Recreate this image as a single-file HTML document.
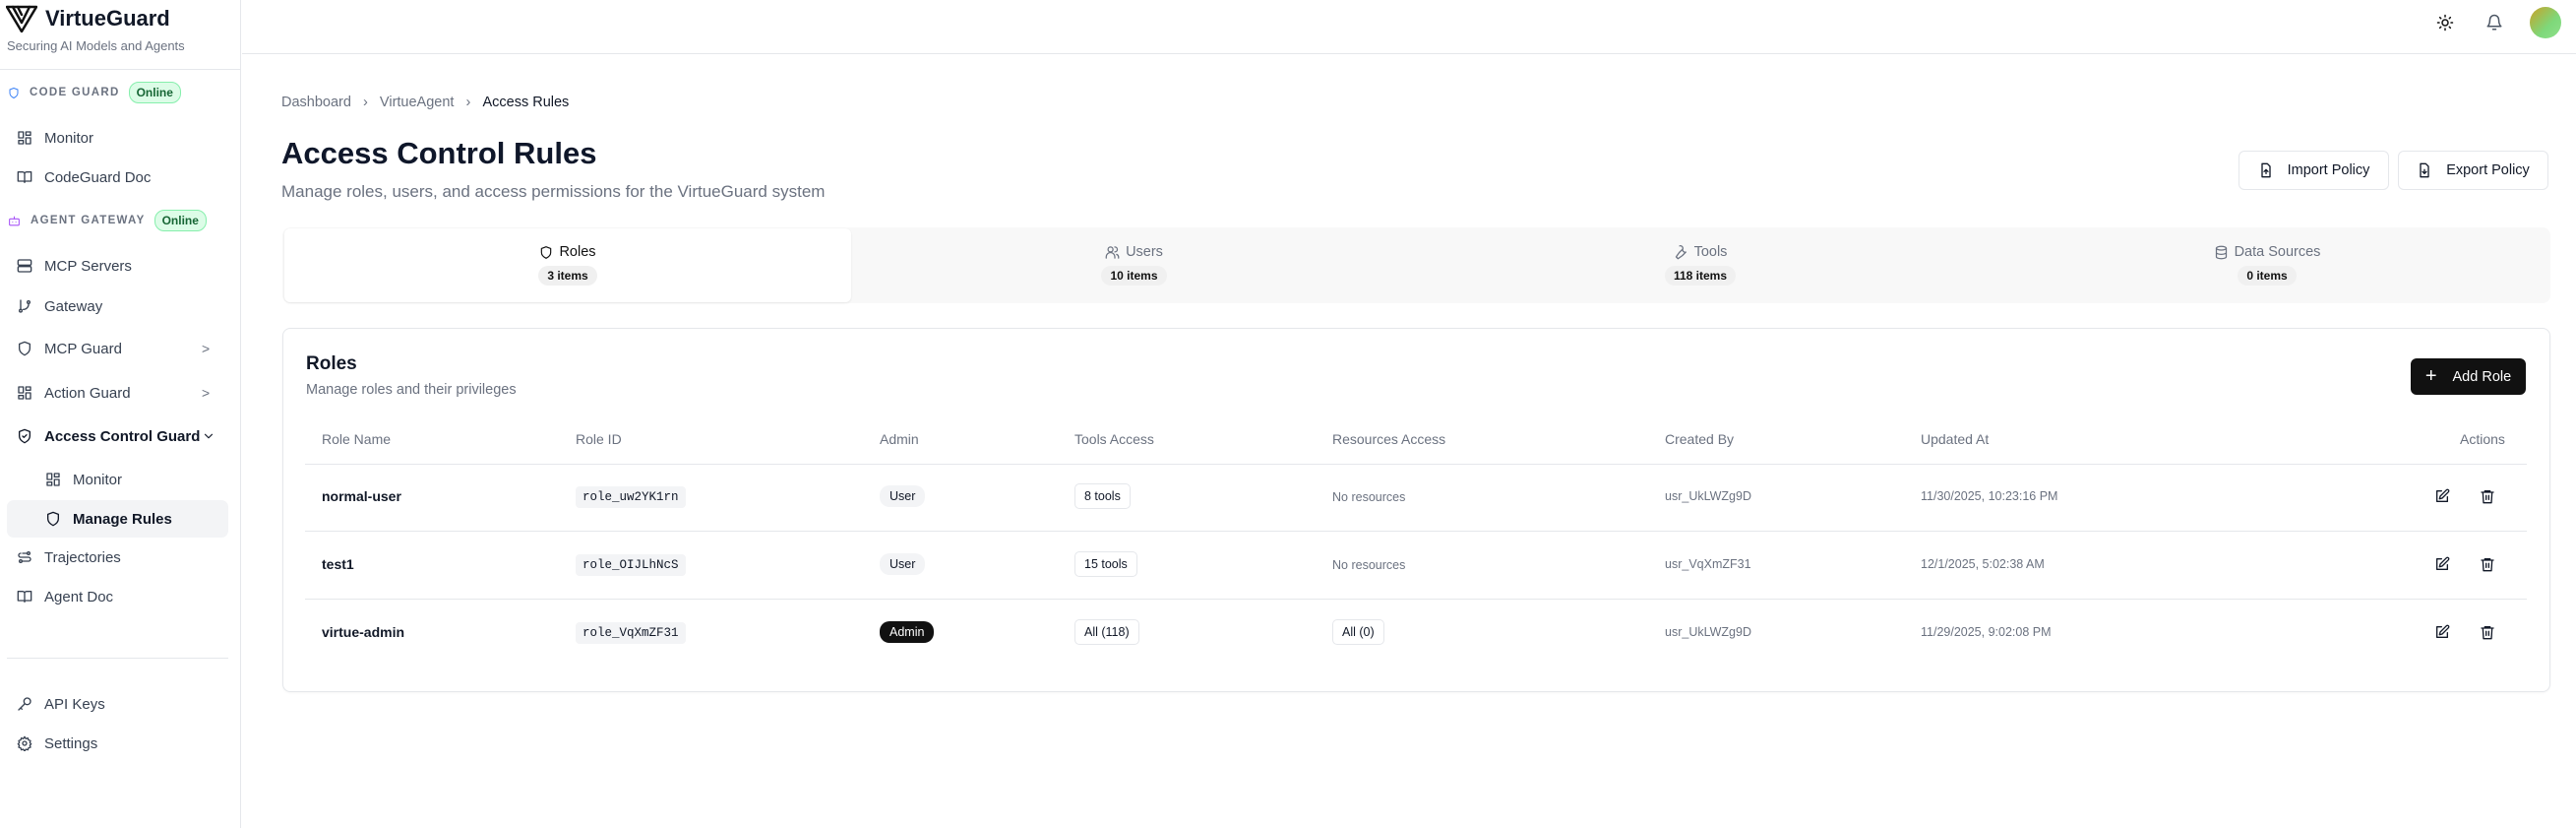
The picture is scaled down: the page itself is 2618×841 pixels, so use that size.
<!DOCTYPE html>
<html><head><meta charset="utf-8"><style>
*{box-sizing:border-box;margin:0;padding:0}
body{width:2618px;height:841px;overflow:hidden;background:#fff;font-family:"Liberation Sans",sans-serif;color:#111827;position:relative}
.abs{position:absolute}
.side{position:absolute;left:0;top:0;width:245px;height:841px;border-right:1px solid #e5e7eb;background:#fff}
.nav{position:absolute;left:0;display:flex;align-items:center;font-size:15px;color:#374151;height:24px}
.nav svg{position:absolute;left:17px;width:16px;height:16px}
.nav span{position:absolute;left:45px;white-space:nowrap}
.sub svg{left:46px}.sub span{left:74px}
.sec{position:absolute;left:8px;display:flex;align-items:center;font-size:11.5px;font-weight:bold;letter-spacing:1.3px;color:#6b7280}
.online{margin-left:9px;background:#dcfce7;border:1px solid #86efac;color:#166534;border-radius:10px;font-size:12px;letter-spacing:0;padding:3px 7px}
.chev{position:absolute;left:205px;font-size:14px;color:#6b7280}
.th{position:absolute;top:438px;font-size:14px;color:#6b7280}
.cell{position:absolute;font-size:14px;transform:translateY(-50%)}
.code{font-family:"Liberation Mono",monospace;font-size:12.5px;background:#f3f4f6;padding:4px 7px;border-radius:4px}
.pill{background:#f3f4f6;border-radius:10px;font-size:12.5px;padding:4px 10px}
.box{border:1px solid #e5e7eb;border-radius:5px;font-size:12.5px;padding:5px 9px}
.small{font-size:12.5px;color:#6b7280}
.hline{position:absolute;left:310px;width:2258px;height:1px;background:#e5e7eb}
svg{fill:none;stroke:currentColor;stroke-width:2;stroke-linecap:round;stroke-linejoin:round}
.tab{position:absolute;top:232px;height:75px;text-align:center;font-size:14.5px;color:#6b7280}
.tab .l{margin-top:16px;display:flex;justify-content:center;align-items:center;gap:6px}
.tab .b{display:inline-block;margin-top:6px;background:#f0f0f0;border-radius:10px;padding:3px 9px;font-size:12px;font-weight:bold;color:#111}
</style></head><body>
<div class="side">
<svg class="abs" style="left:6px;top:5px;width:32px;height:28px;stroke:#111;stroke-width:2.5" viewBox="0 0 32 28"><path d="M1 2h30L16 27z"/><path d="M7 2l9 16 8-16"/><path d="M12 2l4 8"/></svg>
<div class="abs" style="left:46px;top:6px;font-size:22px;font-weight:bold;color:#111827">VirtueGuard</div>
<div class="abs" style="left:7px;top:39px;font-size:13px;color:#6b7280">Securing AI Models and Agents</div>
<div class="abs" style="left:0;top:70px;width:245px;height:1px;background:#e5e7eb"></div>
<div class="sec" style="top:83px"><svg style="width:12px;height:13px;color:#3b82f6;margin-right:10px" viewBox="0 0 24 24"><path d="M12 2l8 3v7c0 5-4 8-8 10-4-2-8-5-8-10V5z"/></svg>CODE GUARD<span class="online">Online</span></div>
<div class="nav" style="top:128px"><svg viewBox="0 0 24 24"><rect x="3" y="3" width="7" height="9"/><rect x="14" y="3" width="7" height="5"/><rect x="14" y="12" width="7" height="9"/><rect x="3" y="16" width="7" height="5"/></svg><span>Monitor</span></div>
<div class="nav" style="top:168px"><svg viewBox="0 0 24 24"><path d="M2 4h7a3 3 0 013 3v13a2 2 0 00-2-2H2zM22 4h-7a3 3 0 00-3 3v13a2 2 0 012-2h8z"/></svg><span>CodeGuard Doc</span></div>
<div class="sec" style="top:213px"><svg style="width:13px;height:13px;color:#a855f7;margin-right:10px" viewBox="0 0 24 24"><rect x="3" y="8" width="18" height="12" rx="2"/><path d="M12 4v4M9 14h0M15 14h0"/></svg>AGENT GATEWAY<span class="online">Online</span></div>
<div class="nav" style="top:258px"><svg viewBox="0 0 24 24"><rect x="2" y="3" width="20" height="8" rx="2"/><rect x="2" y="13" width="20" height="8" rx="2"/></svg><span>MCP Servers</span></div>
<div class="nav" style="top:299px"><svg viewBox="0 0 24 24"><circle cx="6" cy="19" r="2"/><circle cx="18" cy="6" r="2"/><path d="M6 3v14M18 8a8 8 0 01-8 9"/></svg><span>Gateway</span></div>
<div class="nav" style="top:342px"><svg viewBox="0 0 24 24"><path d="M12 2l8 3v7c0 5-4 8-8 10-4-2-8-5-8-10V5z"/></svg><span>MCP Guard</span><b class="chev" style="font-weight:normal">&gt;</b></div>
<div class="nav" style="top:387px"><svg viewBox="0 0 24 24"><rect x="3" y="3" width="7" height="9"/><rect x="14" y="3" width="7" height="5"/><rect x="14" y="12" width="7" height="9"/><rect x="3" y="16" width="7" height="5"/></svg><span>Action Guard</span><b class="chev" style="font-weight:normal">&gt;</b></div>
<div class="nav" style="top:431px;color:#111827"><svg viewBox="0 0 24 24"><path d="M12 2l8 3v7c0 5-4 8-8 10-4-2-8-5-8-10V5z"/><path d="M9 12l2 2 4-4"/></svg><span style="font-weight:bold">Access Control Guard</span><svg style="left:205px;width:14px" viewBox="0 0 24 24"><path d="M6 9l6 6 6-6"/></svg></div>
<div class="nav sub" style="top:475px"><svg viewBox="0 0 24 24"><rect x="3" y="3" width="7" height="9"/><rect x="14" y="3" width="7" height="5"/><rect x="14" y="12" width="7" height="9"/><rect x="3" y="16" width="7" height="5"/></svg><span>Monitor</span></div>
<div class="abs" style="left:7px;top:508px;width:225px;height:38px;background:#f3f4f6;border-radius:7px"></div>
<div class="nav sub" style="top:515px;color:#111827"><svg viewBox="0 0 24 24"><path d="M12 2l8 3v7c0 5-4 8-8 10-4-2-8-5-8-10V5z"/></svg><span style="font-weight:bold">Manage Rules</span></div>
<div class="nav" style="top:554px"><svg viewBox="0 0 24 24"><circle cx="6" cy="18" r="2"/><circle cx="18" cy="6" r="2"/><path d="M9 6h7M8 18h10a3 3 0 000-6H6a3 3 0 010-6"/></svg><span>Trajectories</span></div>
<div class="nav" style="top:594px"><svg viewBox="0 0 24 24"><path d="M2 4h7a3 3 0 013 3v13a2 2 0 00-2-2H2zM22 4h-7a3 3 0 00-3 3v13a2 2 0 012-2h8z"/></svg><span>Agent Doc</span></div>
<div class="abs" style="left:7px;top:668px;width:225px;height:1px;background:#e5e7eb"></div>
<div class="nav" style="top:703px"><svg viewBox="0 0 24 24"><circle cx="16" cy="8" r="5"/><path d="M12 12L3 21M6 18l2 2"/></svg><span>API Keys</span></div>
<div class="nav" style="top:743px"><svg viewBox="0 0 24 24"><circle cx="12" cy="12" r="3"/><path d="M12 2l2 3 3-1 1 3 3 1-1 3 2 2-2 2 1 3-3 1-1 3-3-1-2 3-2-3-3 1-1-3-3-1 1-3-2-2 2-2-1-3 3-1 1-3 3 1z"/></svg><span>Settings</span></div>
</div>

<div class="abs" style="left:246px;top:54px;width:2372px;height:1px;background:#e5e7eb"></div>
<svg class="abs" style="left:2476px;top:14px;width:18px;height:18px;color:#111" viewBox="0 0 24 24"><circle cx="12" cy="12" r="4"/><path d="M12 2v2M12 20v2M4.9 4.9l1.4 1.4M17.7 17.7l1.4 1.4M2 12h2M20 12h2M4.9 19.1l1.4-1.4M17.7 6.3l1.4-1.4"/></svg>
<svg class="abs" style="left:2526px;top:14px;width:18px;height:18px;color:#4b5563" viewBox="0 0 24 24"><path d="M6 8a6 6 0 0112 0c0 7 3 9 3 9H3s3-2 3-9M10 21h4"/></svg>
<div class="abs" style="left:2571px;top:7px;width:32px;height:32px;border-radius:50%;background:linear-gradient(135deg,#c9a227,#7ed87a 60%,#8fe08a)"></div>

<div class="abs" style="left:286px;top:96px;font-size:14.5px;color:#6b7280">Dashboard&nbsp;&nbsp;&nbsp;›&nbsp;&nbsp;&nbsp;VirtueAgent&nbsp;&nbsp;&nbsp;›&nbsp;&nbsp;&nbsp;<span style="color:#111827">Access Rules</span></div>
<div class="abs" style="left:286px;top:138px;font-size:31px;font-weight:bold;color:#0f172a">Access Control Rules</div>
<div class="abs" style="left:286px;top:185px;font-size:17px;color:#6b7280">Manage roles, users, and access permissions for the VirtueGuard system</div>

<div class="abs" style="left:2275px;top:153px;width:153px;height:40px;border:1px solid #e5e7eb;border-radius:6px;font-size:14.5px;display:flex;align-items:center;justify-content:center;gap:14px"><svg style="width:16px;height:16px" viewBox="0 0 24 24"><path d="M14 2H6v20h12V6zM12 17v-6M9 14l3-3 3 3"/></svg>Import Policy</div>
<div class="abs" style="left:2437px;top:153px;width:153px;height:40px;border:1px solid #e5e7eb;border-radius:6px;font-size:14.5px;display:flex;align-items:center;justify-content:center;gap:14px"><svg style="width:16px;height:16px" viewBox="0 0 24 24"><path d="M14 2H6v20h12V6zM12 11v6M9 14l3 3 3-3"/></svg>Export Policy</div>

<div class="abs" style="left:287px;top:231px;width:2305px;height:77px;background:#f8f8f8;border-radius:8px"></div>
<div class="tab" style="left:289px;width:576px;background:#fff;border-radius:6px;box-shadow:0 1px 2px rgba(0,0,0,.08);color:#111"><div class="l"><svg style="width:14px;height:15px" viewBox="0 0 24 24"><path d="M12 2l8 3v7c0 5-4 8-8 10-4-2-8-5-8-10V5z"/></svg>Roles</div><span class="b">3 items</span></div>
<div class="tab" style="left:865px;width:575px"><div class="l"><svg style="width:15px;height:15px" viewBox="0 0 24 24"><circle cx="9" cy="7" r="4"/><path d="M2 21v-2a5 5 0 0114 0v2M16 3a4 4 0 010 8M22 21v-2a5 5 0 00-3-4"/></svg>Users</div><span class="b">10 items</span></div>
<div class="tab" style="left:1440px;width:576px"><div class="l"><svg style="width:15px;height:15px" viewBox="0 0 24 24"><path d="M14.7 6.3a4 4 0 005 5L14 17l-7 5-3-3 5-7 5.7-5.7a4 4 0 00-5-5"/></svg>Tools</div><span class="b">118 items</span></div>
<div class="tab" style="left:2016px;width:576px"><div class="l"><svg style="width:15px;height:15px" viewBox="0 0 24 24"><ellipse cx="12" cy="5" rx="8" ry="3"/><path d="M4 5v14c0 1.7 3.6 3 8 3s8-1.3 8-3V5M4 12c0 1.7 3.6 3 8 3s8-1.3 8-3"/></svg>Data Sources</div><span class="b">0 items</span></div>

<div class="abs" style="left:287px;top:333px;width:2305px;height:370px;border:1px solid #e5e7eb;border-radius:8px;box-shadow:0 1px 2px rgba(0,0,0,.04)"></div>
<div class="abs" style="left:311px;top:359px;font-size:19px;font-weight:bold">Roles</div>
<div class="abs" style="left:311px;top:388px;font-size:14.5px;color:#6b7280">Manage roles and their privileges</div>
<div class="abs" style="left:2450px;top:364px;width:117px;height:37px;background:#111;color:#fff;border-radius:6px;font-size:14.5px;display:flex;align-items:center;justify-content:center;gap:16px"><span style="font-size:20px;font-weight:300">+</span>Add Role</div>

<div class="th" style="left:327px">Role Name</div>
<div class="th" style="left:585px">Role ID</div>
<div class="th" style="left:894px">Admin</div>
<div class="th" style="left:1092px">Tools Access</div>
<div class="th" style="left:1354px">Resources Access</div>
<div class="th" style="left:1692px">Created By</div>
<div class="th" style="left:1952px">Updated At</div>
<div class="th" style="left:2500px">Actions</div>
<div class="hline" style="top:471px"></div>
<div class="hline" style="top:539px"></div>
<div class="hline" style="top:608px"></div>

<div class="cell" style="left:327px;top:504px;font-weight:bold">normal-user</div>
<div class="cell code" style="left:585px;top:505px">role_uw2YK1rn</div>
<div class="cell pill" style="left:894px;top:504px">User</div>
<div class="cell box" style="left:1092px;top:504px">8 tools</div>
<div class="cell small" style="left:1354px;top:505px">No resources</div>
<div class="cell small" style="left:1692px;top:504px">usr_UkLWZg9D</div>
<div class="cell small" style="left:1952px;top:504px">11/30/2025, 10:23:16 PM</div>

<div class="cell" style="left:327px;top:573px;font-weight:bold">test1</div>
<div class="cell code" style="left:585px;top:574px">role_OIJLhNcS</div>
<div class="cell pill" style="left:894px;top:573px">User</div>
<div class="cell box" style="left:1092px;top:573px">15 tools</div>
<div class="cell small" style="left:1354px;top:574px">No resources</div>
<div class="cell small" style="left:1692px;top:573px">usr_VqXmZF31</div>
<div class="cell small" style="left:1952px;top:573px">12/1/2025, 5:02:38 AM</div>

<div class="cell" style="left:327px;top:642px;font-weight:bold">virtue-admin</div>
<div class="cell code" style="left:585px;top:643px">role_VqXmZF31</div>
<div class="cell pill" style="left:894px;top:642px;background:#111;color:#fff">Admin</div>
<div class="cell box" style="left:1092px;top:642px">All (118)</div>
<div class="cell box" style="left:1354px;top:642px">All (0)</div>
<div class="cell small" style="left:1692px;top:642px">usr_UkLWZg9D</div>
<div class="cell small" style="left:1952px;top:642px">11/29/2025, 9:02:08 PM</div>

<svg class="abs" style="left:2474px;top:496px;width:16px;height:16px" viewBox="0 0 24 24"><path d="M11 4H4v16h16v-7M18.5 2.5a2.1 2.1 0 013 3L12 15l-4 1 1-4z"/></svg>
<svg class="abs" style="left:2520px;top:496px;width:16px;height:16px" viewBox="0 0 24 24"><path d="M3 6h18M8 6V4h8v2M5 6l1 16h12l1-16M10 11v6M14 11v6"/></svg>
<svg class="abs" style="left:2474px;top:565px;width:16px;height:16px" viewBox="0 0 24 24"><path d="M11 4H4v16h16v-7M18.5 2.5a2.1 2.1 0 013 3L12 15l-4 1 1-4z"/></svg>
<svg class="abs" style="left:2520px;top:565px;width:16px;height:16px" viewBox="0 0 24 24"><path d="M3 6h18M8 6V4h8v2M5 6l1 16h12l1-16M10 11v6M14 11v6"/></svg>
<svg class="abs" style="left:2474px;top:634px;width:16px;height:16px" viewBox="0 0 24 24"><path d="M11 4H4v16h16v-7M18.5 2.5a2.1 2.1 0 013 3L12 15l-4 1 1-4z"/></svg>
<svg class="abs" style="left:2520px;top:634px;width:16px;height:16px" viewBox="0 0 24 24"><path d="M3 6h18M8 6V4h8v2M5 6l1 16h12l1-16M10 11v6M14 11v6"/></svg>
</body></html>
